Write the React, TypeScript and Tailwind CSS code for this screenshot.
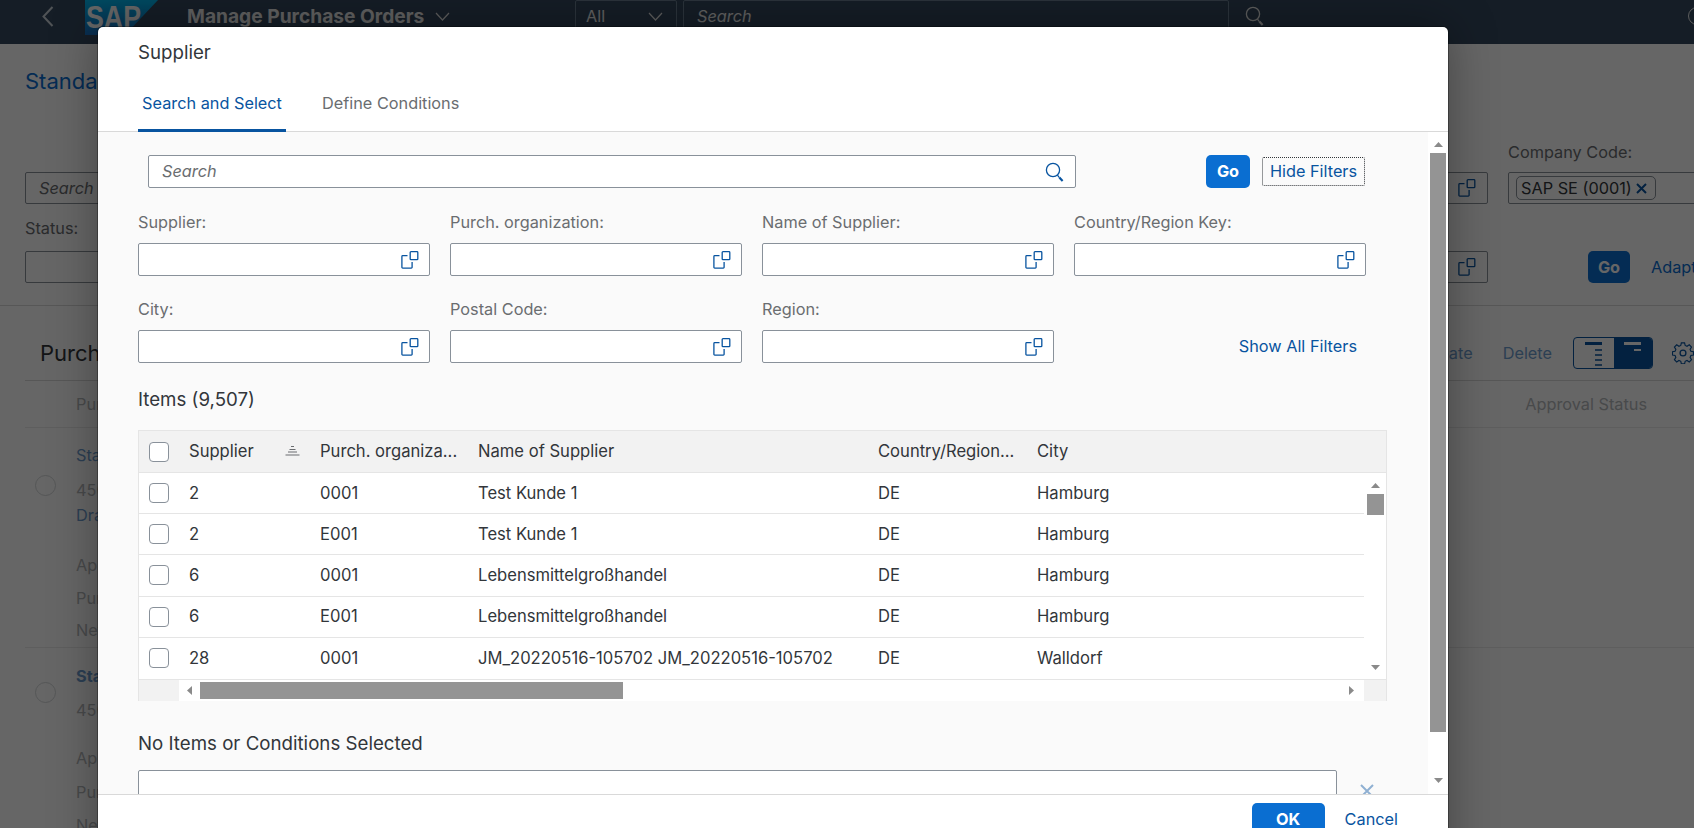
import React from "react";

const ValueHelpIcon = ({ color = "#0854a0" }: { color?: string }) => (
  <svg width="18" height="18" viewBox="0 0 18 18" fill="none" stroke={color} strokeWidth="1.3">
    <rect x="9.2" y="0.7" width="7.6" height="8" rx="0.8" />
    <path d="M6.5 4.7H1.7a0.8 0.8 0 0 0-.8.8v10.8a.8.8 0 0 0 .8.8h8.6a.8.8 0 0 0 .8-.8v-5.3" />
  </svg>
);

const SearchIcon = ({ color = "#0854a0", size = 20 }: { color?: string; size?: number }) => (
  <svg width={size} height={size} viewBox="0 0 20 20" fill="none" stroke={color}>
    <circle cx="8" cy="8" r="6.6" strokeWidth="1.3" />
    <path d="M12.4 13.2l2 2.4" strokeWidth="1.3" />
    <path d="M14.4 15.6l3.2 3.4" strokeWidth="2.2" />
  </svg>
);

const Chevron = ({ color = "#666" }: { color?: string }) => (
  <svg width="15" height="9" viewBox="0 0 15 9" fill="none" stroke={color} strokeWidth="1.2">
    <path d="M1 1l6.5 7L14 1" />
  </svg>
);

const Arrow = ({ dir }: { dir: "up" | "down" | "left" | "right" }) => {
  const points = {
    up: "0,5 4.5,0 9,5",
    down: "0,0 9,0 4.5,5",
    left: "5,0 5,9 0,4.5",
    right: "0,0 5,4.5 0,9",
  }[dir];
  const vertical = dir === "up" || dir === "down";
  return (
    <svg width={vertical ? 9 : 5} height={vertical ? 5 : 9} className="shrink-0">
      <polygon points={points} fill="#8a8a8a" />
    </svg>
  );
};

const Checkbox = () => (
  <div className="w-[20px] h-[20px] shrink-0 rounded-[4px] border border-[#89919a] bg-white" />
);

const HelpInput = () => (
  <div className="h-[33px] rounded-[2px] border border-[#89919a] bg-white flex items-center justify-end pr-[10px]">
    <ValueHelpIcon />
  </div>
);

const FilterField = ({ label }: { label: string }) => (
  <div>
    <div className="h-[19px] leading-[19px] mb-[11px] text-[#6a6d70]">{label}</div>
    <HelpInput />
  </div>
);

const rows = [
  ["2", "0001", "Test Kunde 1", "DE", "Hamburg"],
  ["2", "E001", "Test Kunde 1", "DE", "Hamburg"],
  ["6", "0001", "Lebensmittelgroßhandel", "DE", "Hamburg"],
  ["6", "E001", "Lebensmittelgroßhandel", "DE", "Hamburg"],
  ["28", "0001", "JM_20220516-105702 JM_20220516-105702", "DE", "Walldorf"],
];

const SortIcon = () => (
  <svg width="15" height="10" viewBox="0 0 15 10" stroke="#6a6d70" strokeWidth="1" className="shrink-0">
    <path d="M6 0.5h3M4.5 3.5h6M3 6h9M0.5 9h14" />
  </svg>
);

const SupplierTable = () => (
  <div className="w-[1249px] border-x border-t border-[#e5e5e5] text-[#32363a] text-[16.6px]">
    <div className="h-[42px] bg-[#f2f2f2] border-b border-[#e5e5e5] grid grid-cols-[40px_131px_158px_400px_159px_1fr] items-center">
      <div className="pl-[10px]">
        <Checkbox />
      </div>
      <div className="pl-[10px] pr-[10px] flex items-center justify-between">
        Supplier
        <SortIcon />
      </div>
      <div className="pl-[10px] whitespace-nowrap">Purch. organiza...</div>
      <div className="pl-[10px]">Name of Supplier</div>
      <div className="pl-[10px] whitespace-nowrap">Country/Region...</div>
      <div className="pl-[10px]">City</div>
    </div>
    <div className="flex bg-white border-b border-[#e5e5e5]">
      <div className="w-[1225px]">
        {rows.map((r, i) => (
          <div
            key={i}
            className="h-[41.2px] border-b border-[#e5e5e5] last:border-b-0 grid grid-cols-[40px_131px_158px_400px_159px_1fr] items-center"
          >
            <div className="pl-[10px]">
              <Checkbox />
            </div>
            {r.map((c, j) => (
              <div key={j} className="pl-[10px] whitespace-nowrap">
                {c}
              </div>
            ))}
          </div>
        ))}
      </div>
      <div className="flex-1 flex flex-col items-center pt-[10px] pb-[9px]">
        <Arrow dir="up" />
        <div className="w-[17px] h-[21px] mt-[6px] bg-[#949494]" />
        <div className="flex-1" />
        <Arrow dir="down" />
      </div>
    </div>
    <div className="h-[21px] bg-white flex items-center">
      <div className="w-[40px] h-full bg-[#f2f2f2]" />
      <div className="ml-[8px]">
        <Arrow dir="left" />
      </div>
      <div className="ml-[8px] w-[423px] h-[17px] bg-[#949494]" />
      <div className="flex-1" />
      <Arrow dir="right" />
      <div className="ml-[10px] w-[22px] h-full bg-[#f2f2f2]" />
    </div>
  </div>
);

const ValueHelpDialog = () => (
  <div className="absolute left-[98px] top-[27px] w-[1350px] h-[860px] flex flex-col bg-white rounded-t-[5px] shadow-[0_0_0_1px_rgba(0,0,0,0.3),0_0_48px_rgba(0,0,0,0.35)] text-[16.3px]">
    <div className="h-[105px] shrink-0 border-b border-[#d9d9d9] px-[40px] pt-[14px]">
      <div className="h-[24px] leading-[24px] text-[18.7px] text-[#32363a]">Supplier</div>
      <div className="flex mt-[20px]">
        <div className="w-[148px] pt-[6px] pb-[14px] h-[47px] border-b-[3px] border-[#0854a0] text-center leading-[24px] whitespace-nowrap text-[#0854a0]">
          Search and Select
        </div>
        <div className="ml-[36px] pt-[6px] leading-[24px] text-[#6a6d70]">Define Conditions</div>
      </div>
    </div>

    <div className="h-[662px] shrink-0 flex bg-white">
      <div className="w-[1330px] bg-[#fafafa] pl-[40px] pt-[23px] overflow-hidden">
        <div className="flex items-center h-[33px]">
          <div className="ml-[10px] w-[928px] h-[33px] rounded-[2px] border border-[#89919a] bg-white flex items-center justify-between pl-[13px] pr-[10px] italic text-[#6a6d70]">
            Search
            <SearchIcon />
          </div>
          <button className="ml-[130px] w-[44px] h-[33px] rounded-[5px] bg-[#0a6ed1] text-white font-bold">
            Go
          </button>
          <button className="ml-[12px] w-[103px] h-[29px] rounded-[2px] border border-dotted border-[#32363a] text-[#0854a0] whitespace-nowrap">
            Hide Filters
          </button>
        </div>

        <div className="mt-[25px] w-[1228px] grid grid-cols-4 gap-x-[20px] gap-y-[24px]">
          <FilterField label="Supplier:" />
          <FilterField label="Purch. organization:" />
          <FilterField label="Name of Supplier:" />
          <FilterField label="Country/Region Key:" />
          <FilterField label="City:" />
          <FilterField label="Postal Code:" />
          <FilterField label="Region:" />
          <div className="flex items-end justify-end pr-[9px]">
            <div className="h-[33px] leading-[33px] text-[#0854a0]">Show All Filters</div>
          </div>
        </div>

        <div className="mt-[25px] h-[24px] leading-[24px] text-[18.7px] text-[#32363a]">Items (9,507)</div>
        <div className="mt-[18px]">
          <SupplierTable />
        </div>

        <div className="mt-[31px] h-[24px] leading-[24px] text-[18.7px] text-[#32363a]">
          No Items or Conditions Selected
        </div>
        <div className="mt-[14px] flex">
          <div className="w-[1199px] h-[33px] rounded-[2px] border border-[#89919a] bg-white" />
          <svg width="14" height="14" viewBox="0 0 14 14" stroke="#8fb0d2" strokeWidth="2" className="ml-[23px] mt-[14px]">
            <path d="M1 1l12 12M13 1L1 13" />
          </svg>
        </div>
      </div>

      <div className="flex-1 flex flex-col items-center pt-[10px]">
        <Arrow dir="up" />
        <div className="w-[16px] h-[579px] mt-[6px] bg-[#949494]" />
        <div className="mt-[46px]">
          <Arrow dir="down" />
        </div>
      </div>
    </div>

    <div className="flex-1 border-t border-[#d9d9d9] flex justify-end items-start pt-[8px] pr-[50px]">
      <button className="w-[73px] h-[33px] rounded-[5px] bg-[#0a6ed1] text-white font-bold">OK</button>
      <button className="ml-[20px] h-[33px] text-[#0854a0]">Cancel</button>
    </div>
  </div>
);

const ShellBar = () => (
  <div className="h-[44px] shrink-0 bg-[#354a5f] flex items-center pb-[12px] overflow-hidden text-[#f0f0f0]">
    <svg width="12" height="21" viewBox="0 0 12 21" fill="none" stroke="#c8d0d8" strokeWidth="2" className="ml-[42px]">
      <path d="M10.5 1L1.5 10.5l9 9.5" />
    </svg>
    <svg width="73" height="35" className="ml-[31px] self-start shrink-0">
      <defs>
        <linearGradient id="sapLogo" x1="0" y1="0" x2="0" y2="1">
          <stop offset="0" stopColor="#00b8f1" />
          <stop offset="1" stopColor="#1870c5" />
        </linearGradient>
      </defs>
      <polygon points="0,0 73,0 40,35 0,35" fill="url(#sapLogo)" />
      <text
        x="1"
        y="28"
        fontFamily="Liberation Sans, sans-serif"
        fontWeight="700"
        fontSize="32"
        fill="#ffffff"
        textLength="55"
        lengthAdjust="spacingAndGlyphs"
      >
        SAP
      </text>
    </svg>
    <div className="ml-[29px] w-[238px] shrink-0 font-bold text-[19.2px] whitespace-nowrap">Manage Purchase Orders</div>
    <div className="ml-[10px]">
      <Chevron color="#e8e8e8" />
    </div>
    <div className="ml-[125px] self-start w-[102px] h-[32px] border border-[#6b8094] rounded-[2px] flex items-center justify-between pl-[10px] pr-[13px] shrink-0">
      All
      <Chevron color="#e8e8e8" />
    </div>
    <div className="ml-[6px] self-start w-[546px] h-[32px] border border-[#6b8094] rounded-[2px] flex items-center pl-[13px] italic shrink-0">
      Search
    </div>
    <div className="ml-[16px]">
      <SearchIcon color="#e8e8e8" />
    </div>
    <div className="flex-1" />
    <div className="-mr-[12px] w-[18px] h-[18px] rounded-full border border-[#e8e8e8] shrink-0" />
  </div>
);

const FilterBar = () => (
  <div className="h-[262px] shrink-0 border-b border-[#d9d9d9] pl-[25px]">
    <div className="pt-[22px] h-[30px] box-content leading-[30px] text-[22px] text-[#0a6ed1]">Standard</div>
    <div className="mt-[76px] flex">
      <div className="w-[300px] shrink-0">
        <div className="h-[32px] border border-[#89919a] rounded-[2px] flex items-center pl-[13px] italic text-[#6a6d70]">
          Search
        </div>
        <div className="h-[20px] mt-[14px] leading-[20px] text-[#6a6d70]">Status:</div>
        <div className="h-[32px] mt-[13px] border border-[#89919a] rounded-[2px]" />
      </div>
      <div className="flex-1" />
      <div className="w-[300px] shrink-0">
        <div className="h-[32px] border border-[#89919a] rounded-[2px] flex items-center justify-end pr-[11px]">
          <ValueHelpIcon />
        </div>
        <div className="h-[32px] mt-[47px] border border-[#89919a] rounded-[2px] flex items-center justify-end pr-[11px]">
          <ValueHelpIcon />
        </div>
      </div>
      <div className="ml-[20px] w-[186px] shrink-0 -mt-[32px] overflow-hidden">
        <div className="h-[20px] mt-[2px] leading-[20px] text-[#6a6d70] whitespace-nowrap">Company Code:</div>
        <div className="h-[32px] mt-[10px] -mr-[40px] border border-[#89919a] rounded-[2px] flex items-center pl-[7px]">
          <div className="h-[24px] w-[140px] shrink-0 border border-[#89919a] rounded-[5px] flex items-center pl-[4px] whitespace-nowrap text-[#32363a]">
            SAP SE (0001)
            <svg width="11" height="11" viewBox="0 0 11 11" stroke="#0854a0" strokeWidth="2" className="ml-[4px] shrink-0">
              <path d="M1 1l9 9M10 1L1 10" />
            </svg>
          </div>
        </div>
        <div className="mt-[47px] flex items-center whitespace-nowrap">
          <div className="ml-[80px] w-[42px] h-[32px] shrink-0 rounded-[5px] bg-[#0a6ed1] text-white font-bold text-center leading-[32px]">
            Go
          </div>
          <div className="ml-[21px] text-[#0a6ed1]">Adapt Filters</div>
        </div>
      </div>
    </div>
  </div>
);

const OrderRow = ({ lines, radioTop, pad }: { lines: [string, string][]; radioTop: string; pad: string }) => (
  <div className={`flex ${pad}`}>
    <div className={`w-[51px] pl-[10px] ${radioTop}`}>
      <div className="w-[21px] h-[21px] rounded-full border border-[#d5d7d9]" />
    </div>
    <div>
      {lines.map(([text, cls], i) => (
        <div key={i} className={`h-[20px] leading-[20px] ${cls}`}>
          {text}
        </div>
      ))}
    </div>
  </div>
);

const ResultsTable = () => (
  <div className="ml-[25px]">
    <div className="h-[75px] border-b border-[#d9d9d9] flex items-center pt-[20px] pl-[15px]">
      <div className="text-[22px] text-[#32363a]">Purchase Orders</div>
      <div className="flex-1" />
      <div className="text-[#6f9ed0]">Create</div>
      <div className="ml-[30px] text-[#6f9ed0]">Delete</div>
      <div className="ml-[21px] w-[80px] h-[32px] rounded-[4px] border border-[#0854a0] flex overflow-hidden shrink-0">
        <div className="w-[40px] flex justify-center pt-[4px]">
          <svg width="20" height="24" viewBox="0 0 20 24" stroke="#0854a0">
            <path d="M1 1.5h17" strokeWidth="3" />
            <path d="M11 8h7M11 13h7M11 18h7M11 23h7" strokeWidth="1.4" />
          </svg>
        </div>
        <div className="flex-1 bg-[#0854a0] flex justify-center pt-[4px]">
          <svg width="20" height="24" viewBox="0 0 20 24" stroke="#ffffff">
            <path d="M1 1.5h17" strokeWidth="3" />
            <path d="M11 8h7" strokeWidth="2" />
          </svg>
        </div>
      </div>
      <svg width="22" height="22" viewBox="0 0 24 24" fill="none" stroke="#0854a0" strokeWidth="1.4" className="ml-[19px] shrink-0">
        <circle cx="12" cy="12" r="3.2" />
        <path d="M10 1.5h4l.7 3.2 2.3 1 2.8-1.8 2.8 2.8-1.8 2.8 1 2.3 3.2.7v4l-3.2.7-1 2.3 1.8 2.8-2.8 2.8-2.8-1.8-2.3 1-.7 3.2h-4l-.7-3.2-2.3-1-2.8 1.8-2.8-2.8 1.8-2.8-1-2.3-3.2-.7v-4l3.2-.7 1-2.3L1.4 6.7l2.8-2.8L7 5.7l2.3-1z" transform="scale(0.88) translate(1.6 -0.4)" />
      </svg>
    </div>
    <div className="h-[47px] border-b border-[#ececec] flex items-center pl-[51px] text-[#b5b8bb]">
      Purchase Order
      <div className="ml-auto mr-[47px]">Approval Status</div>
    </div>
    <div className="border-b border-[#ececec] h-[220px]">
      <OrderRow
        pad="pt-[17px]"
        radioTop="pt-[30px]"
        lines={[
          ["Standard PO", "text-[#6f9ed0]"],
          ["4500000001", "mt-[15px] text-[#b5b8bb]"],
          ["Draft", "mt-[5px] text-[#6f9ed0]"],
          ["Approval", "mt-[30px] text-[#b5b8bb]"],
          ["Purchasing", "mt-[13px] text-[#b5b8bb]"],
          ["Net Value", "mt-[12px] text-[#b5b8bb]"],
        ]}
      />
    </div>
    <OrderRow
      pad="pt-[18px]"
      radioTop="pt-[16px]"
      lines={[
        ["Standard PO", "font-bold text-[#6f9ed0]"],
        ["4500000002", "mt-[14px] text-[#b5b8bb]"],
        ["Approval", "mt-[28px] text-[#b5b8bb]"],
        ["Purchasing", "mt-[14px] text-[#b5b8bb]"],
        ["Net Value", "mt-[13px] text-[#b5b8bb]"],
      ]}
    />
  </div>
);

export default function App() {
  return (
    <div className="relative w-full h-[828px] overflow-hidden bg-white font-['Inter',sans-serif] text-[16.3px]">
      <div className="h-full flex flex-col">
        <ShellBar />
        <FilterBar />
        <ResultsTable />
      </div>
      <div className="absolute inset-0 bg-black/60" />
      <ValueHelpDialog />
    </div>
  );
}
